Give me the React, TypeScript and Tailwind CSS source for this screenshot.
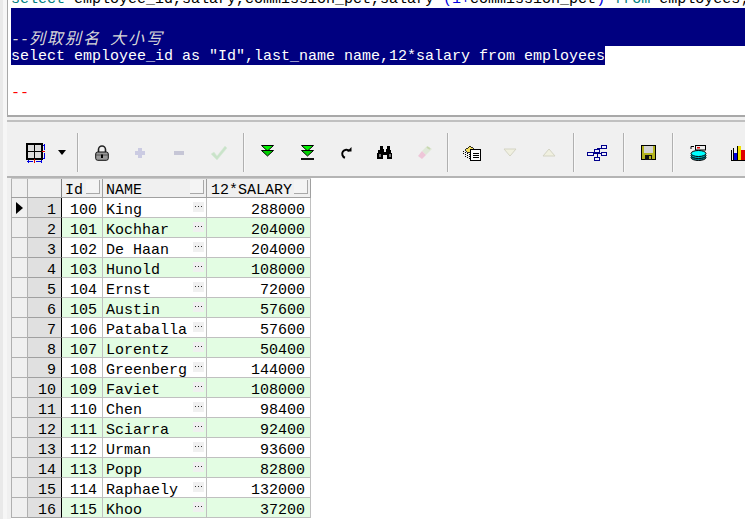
import React from "react";

const rows: [number, number, string, number][] = [
  [1, 100, "King", 288000],
  [2, 101, "Kochhar", 204000],
  [3, 102, "De Haan", 204000],
  [4, 103, "Hunold", 108000],
  [5, 104, "Ernst", 72000],
  [6, 105, "Austin", 57600],
  [7, 106, "Pataballa", 57600],
  [8, 107, "Lorentz", 50400],
  [9, 108, "Greenberg", 144000],
  [10, 109, "Faviet", 108000],
  [11, 110, "Chen", 98400],
  [12, 111, "Sciarra", 92400],
  [13, 112, "Urman", 93600],
  [14, 113, "Popp", 82800],
  [15, 114, "Raphaely", 132000],
  [16, 115, "Khoo", 37200],
];

const Sep = () => <div className="w-[2px] h-[39px] bg-[#b0b0b0] border-r border-[#f8f8f8] shrink-0" />;

const Gap = ({ w }: { w: string }) => <div className={`${w} shrink-0`} />;

const Slot = ({ w, children }: { w: string; children?: React.ReactNode }) => (
  <div className={`${w} h-[39px] flex items-center justify-center shrink-0`}>{children}</div>
);

const GridIcon = () => (
  <svg width="20" height="20" viewBox="0 0 20 20" shapeRendering="crispEdges">
    <rect x="3" y="2" width="13" height="13" fill="#dcdcdc" />
    <path d="M2 1h15v15H2z" fill="none" stroke="#000" strokeWidth="1.6" />
    <path d="M9.5 1v15M2 8.5h15" stroke="#000" strokeWidth="1.6" />
    <path d="M17 8.5h3M9.5 16v4" stroke="#e00000" strokeWidth="1" />
    <path d="M19.5 1v6M19.5 10v6M2 18.5h6M11 18.5h6" stroke="#0000e0" strokeWidth="1" />
    <path d="M18 2h3M18 15h3M3 17v3M16 17v3" stroke="#0000e0" strokeWidth="1" />
  </svg>
);

const Lock = () => (
  <svg width="14" height="16" viewBox="0 0 14 16">
    <path d="M3.5 7V4.5a3.5 3.5 0 0 1 7 0V7" fill="none" stroke="#222" strokeWidth="1.6" />
    <rect x="0.7" y="7" width="12.6" height="8.3" rx="2" fill="#999" stroke="#111" />
    <path d="M1 10h12" stroke="#555" />
    <path d="M7 9.5v3.5" stroke="#000" strokeWidth="2" />
  </svg>
);

const Plus = () => (
  <svg width="10" height="10" viewBox="0 0 10 10" shapeRendering="crispEdges">
    <path d="M3 0h4v3h3v4H7v3H3V7H0V3h3z" fill="#cbcbe2" />
  </svg>
);
const Minus = () => (
  <svg width="10" height="4" viewBox="0 0 10 4"><rect width="10" height="4" fill="#c6c6d6" /></svg>
);
const Check = () => (
  <svg width="18" height="16" viewBox="0 0 18 16">
    <path d="M1 9l3-2 3 4 8-10 2 2L7 15z" fill="#c9e3c9" stroke="#d8e8d8" strokeWidth="0.5" />
  </svg>
);

const DoubleDown = ({ bar }: { bar?: boolean }) => (
  <svg width="13" height="15" viewBox="0 0 13 15">
    <path d="M0.5 0.5h12L6.5 6z" fill="#00f000" stroke="#000" />
    <path d="M0.5 5.5h12L6.5 11z" fill="#00d000" stroke="#000" />
    {bar && <rect x="0" y="13" width="13" height="2" fill="#111" />}
  </svg>
);

const Redo = () => (
  <svg width="12" height="12" viewBox="0 0 12 12">
    <path d="M9.5 4A4.2 4.2 0 1 0 5 10.8" fill="none" stroke="#000" strokeWidth="2" />
    <path d="M7 4.5h4.5V0z" fill="#000" />
  </svg>
);

const Binoculars = () => (
  <svg width="16" height="14" viewBox="0 0 16 14" shapeRendering="crispEdges">
    <path d="M3 0h3v3h1v3h2V3h1V0h3v4h1v3h1v6H10V9H6v4H0V7h1V4h2z" fill="#000" />
    <path d="M2 8h2v3H2zM12 8h2v3h-2z" fill="#777" />
  </svg>
);

const Eraser = () => (
  <svg width="16" height="16" viewBox="0 0 16 16">
    <path d="M5 6l5-5 5 3-6 6z" fill="#dfe8d8" />
    <path d="M1 11l4-5 4 4-4 4z" fill="#eec6d8" />
    <path d="M10 2l3 2" stroke="#c8d8b0" strokeWidth="2" />
  </svg>
);

const QueryIcon = () => (
  <svg width="18" height="16" viewBox="0 0 18 16" shapeRendering="crispEdges">
    <path d="M2 5l5-4 4 3-6 4z" fill="#f4e060" stroke="#000" strokeWidth="0.8" />
    <path d="M0.5 6v4M2.5 7v6M4.5 8v6M6.5 9v6" stroke="#000" strokeDasharray="1 1" />
    <rect x="7.5" y="4.5" width="10" height="11" fill="#fff" stroke="#000" strokeWidth="1.4" />
    <path d="M10 8h6M10 10h6M10 12h6" stroke="#000" />
  </svg>
);

const Tri = ({ up }: { up?: boolean }) => (
  <svg width="14" height="9" viewBox="0 0 14 9">
    <path d={up ? "M7 1L13 8H1z" : "M1 1h12L7 8z"} fill="#f0f0e0" stroke="#d4d4c4" />
  </svg>
);

const Tree = () => (
  <svg width="20" height="16" viewBox="0 0 20 16" shapeRendering="crispEdges" fill="#f0f0ff" stroke="#00008b">
    <path d="M7 8.5h3M10 3.5v10M10 3.5h5M10 8.5h5M10 13.5h2" fill="none" />
    <rect x="0.5" y="7" width="6" height="3" />
    <rect x="7.5" y="4" width="5" height="3" />
    <rect x="14.5" y="0.5" width="5" height="3" />
    <rect x="14.5" y="7" width="5" height="3" />
    <rect x="7.5" y="12" width="5" height="3" />
  </svg>
);

const Floppy = () => (
  <svg width="15" height="15" viewBox="0 0 15 15" shapeRendering="crispEdges">
    <rect x="0.5" y="0.5" width="14" height="14" fill="#b4b41e" stroke="#000" />
    <rect x="3" y="1" width="9" height="7" fill="#d4d4d4" />
    <rect x="4" y="10" width="7" height="5" fill="#111" />
    <rect x="8" y="11" width="2" height="3" fill="#b4b41e" />
  </svg>
);

const DbIcon = () => (
  <svg width="17" height="16" viewBox="0 0 17 16">
    <rect x="5.5" y="0.5" width="10" height="4.5" fill="#eee" stroke="#000" />
    <rect x="7" y="2" width="3" height="1.5" fill="#e00000" />
    <path d="M1 4V1.5h3" fill="none" stroke="#000" />
    <ellipse cx="8.5" cy="12.5" rx="7.5" ry="3" fill="#007f8f" stroke="#000" />
    <ellipse cx="8.5" cy="10.5" rx="7.5" ry="3" fill="#00b8c8" stroke="#000" />
    <ellipse cx="8.5" cy="8.5" rx="7.5" ry="3" fill="#00ffff" stroke="#000" />
  </svg>
);

const Chart = () => (
  <svg width="15" height="16" viewBox="0 0 15 16" shapeRendering="crispEdges">
    <path d="M0.5 5v10.5H15" fill="none" stroke="#000" />
    <path d="M2.5 3v12" stroke="#000" />
    <rect x="3" y="8" width="3" height="7" fill="#0000e0" />
    <path d="M6.5 1v14" stroke="#000" />
    <rect x="7" y="1" width="3" height="14" fill="#f0e000" />
    <rect x="10" y="5" width="5" height="10" fill="#e00000" />
  </svg>
);

const SortMark = () => (
  <div className="w-[14px] h-[14px] mt-[1px] border-r border-b border-[#a8a8a8] bg-[#f4f4f4] shrink-0" />
);

const Dots = () => (
  <div className="w-[11px] h-[10px] bg-[#f0f0f0] flex justify-center pt-[4px] gap-[2px] shrink-0 mt-[4px] mr-[2px]">
    <span className="w-[1px] h-[1px] bg-[#333]" />
    <span className="w-[1px] h-[1px] bg-[#333]" />
    <span className="w-[1px] h-[1px] bg-[#333]" />
  </div>
);

const cols = "grid grid-cols-[17px_34px_41px_104px_104px] grid-rows-[1fr] h-[20px]";

export default function App() {
  return (
    <div className="w-[745px] h-[519px] overflow-hidden bg-white flex font-['Liberation_Mono',monospace] text-[15px] leading-[19px] text-black">
      <div className="w-[3px] bg-[#e9e9e9] shrink-0" />
      <div className="w-[4px] bg-[#f6f6f6] shrink-0" />
      <div className="w-[738px] flex flex-col h-full shrink-0">
        {/* editor */}
        <div className="h-[117px] shrink-0 bg-white border-l border-b-2 border-[#a8a8a8] pl-[3px] overflow-hidden">
          <div className="-mt-[11px] whitespace-pre">
            <div className="h-[19px] pt-[1px]">
              <span className="text-[#008080]">select</span>
              {" employee_id,salary,commission_pct,salary*"}
              <span className="text-[#0000e0]">(1+</span>
              {"commission_pct"}
              <span className="text-[#0000e0]">)</span>{" "}
              <span className="text-[#008080]">from</span>
              {" employees;"}
            </div>
            <div className="h-[19px] bg-[#000080]" />
            <div className="h-[19px] bg-[#000080] text-[#d8d8d8] italic pt-[1px]">
              --<span className="font-['Noto_Sans_CJK_SC',sans-serif] text-[16px] tracking-[2px]">列取别名</span> <span className="font-['Noto_Sans_CJK_SC',sans-serif] text-[16px] tracking-[2px]">大小写</span>
            </div>
            <div className="h-[19px] w-[594px] bg-[#000080] text-white pt-[1px]">{'select employee_id as "Id",last_name name,12*salary from employees'}</div>
            <div className="h-[19px]" />
            <div className="h-[19px] text-[#ff0000]">--</div>
          </div>
        </div>

        {/* toolbar */}
        <div className="h-[61px] shrink-0 bg-[#f0f0f0] border-b-2 border-[#b4b4b4] overflow-hidden">
          <div className="border-t-2 border-[#c0c0c0] mt-[3px] h-[13px]" />
          <div className="flex items-center pl-[9px]">
            <Slot w="w-[38px]"><GridIcon /></Slot>
            <Slot w="w-[16px]">
              <svg width="8" height="5" viewBox="0 0 8 5"><path d="M0 0h8L4 5z" fill="#000" /></svg>
            </Slot>
            <Gap w="w-[7px]" />
            <Sep />
            <Slot w="w-[46px]"><Lock /></Slot>
            <Slot w="w-[30px]"><Plus /></Slot>
            <Slot w="w-[48px]"><Minus /></Slot>
            <Slot w="w-[32px]"><Check /></Slot>
            <Gap w="w-[8px]" />
            <Sep />
            <Slot w="w-[44px]"><DoubleDown /></Slot>
            <Slot w="w-[36px]"><DoubleDown bar /></Slot>
            <Slot w="w-[42px]"><Redo /></Slot>
            <Slot w="w-[36px]"><Binoculars /></Slot>
            <Slot w="w-[44px]"><Eraser /></Slot>
            <Sep />
            <Slot w="w-[46px]"><QueryIcon /></Slot>
            <Slot w="w-[30px]"><Tri /></Slot>
            <Slot w="w-[48px]"><Tri up /></Slot>
            <Sep />
            <Slot w="w-[44px]"><Tree /></Slot>
            <Gap w="w-[4px]" />
            <Sep />
            <Slot w="w-[46px]"><Floppy /></Slot>
            <Gap w="w-[1px]" />
            <Sep />
            <Slot w="w-[48px]"><DbIcon /></Slot>
            <Slot w="w-[32px]"><Chart /></Slot>
          </div>
        </div>

        {/* grid */}
        <div className="flex-1 flex min-h-0">
          <div className="w-[4px] bg-[#f0f0f0] shrink-0" />
          <div className="w-[300px] shrink-0 leading-[12px]">
            <div className={`${cols} bg-[#f0f0f0] border-t border-b border-t-[#c8c8c8] border-b-[#a0a0a0]`}>
              <div className="border-l border-r border-[#b0b0b0]" />
              <div className="border-r border-[#808080]" />
              <div className="border-r border-[#a0a0a0] flex justify-between pl-[3px] pr-[2px]">
                <span className="pt-[6px]">Id</span>
                <SortMark />
              </div>
              <div className="border-r border-[#a0a0a0] flex justify-between pl-[3px] pr-[2px]">
                <span className="pt-[6px]">NAME</span>
                <SortMark />
              </div>
              <div className="border-r border-[#a0a0a0] flex justify-between pl-[4px] pr-[2px]">
                <span className="pt-[6px]">12*SALARY</span>
                <SortMark />
              </div>
            </div>
            {rows.map(([n, id, name, sal], i) => (
              <div key={n} className={`${cols} ${i % 2 ? "bg-[#e3fde3]" : "bg-white"}`}>
                <div className="bg-[#f0f0f0] border-l border-r border-b border-[#b0b0b0] flex items-center justify-center">
                  {i === 0 && (
                    <svg width="7" height="12" viewBox="0 0 7 12"><path d="M0 0l7 6-7 6z" fill="#000" /></svg>
                  )}
                </div>
                <div className="bg-[#e0e0e0] border-r border-b border-r-black border-b-[#a0a0a0] text-right pr-[5px] pt-[7px]">{n}</div>
                <div className="border-r border-b border-[#c0c0c0] text-right pr-[5px] pt-[7px]">{id}</div>
                <div className="border-r border-b border-[#c0c0c0] flex justify-between pl-[3px]">
                  <span className="pt-[7px]">{name}</span>
                  <Dots />
                </div>
                <div className="border-r border-b border-[#c0c0c0] text-right pr-[5px] pt-[7px]">{sal}</div>
              </div>
            ))}
          </div>
        </div>
      </div>
    </div>
  );
}
